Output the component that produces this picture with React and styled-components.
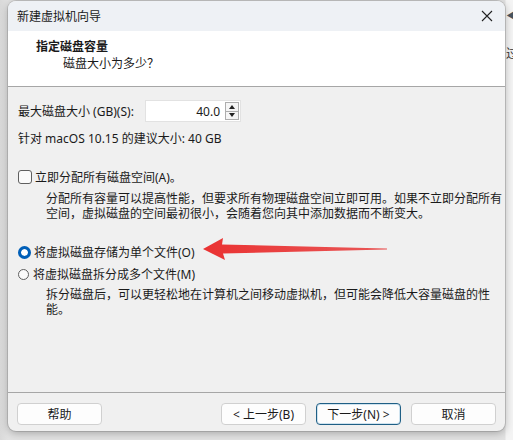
import React, { useState } from 'react';
import styled, { createGlobalStyle } from 'styled-components';

const GlobalStyle = createGlobalStyle`
  html, body {
    margin: 0;
    padding: 0;
    background: #e4e4e4;
    overflow: hidden;
  }
  body {
    font-family: "Noto Sans", "Noto Sans CJK SC", sans-serif;
    font-size: 12px;
    color: #1a1a1a;
  }
`;

const Desktop = styled.div`
  position: relative;
  width: 513px;
  height: 440px;
  padding: 1px 8px 0 8px;
  box-sizing: border-box;
  background: linear-gradient(90deg, #d9d9d9 0, #e2e2e2 8px, #e2e2e2 505px, #f4f4f4 506px);
`;

/* sliver of the window lying behind the wizard */
const BehindStrip = styled.div`
  position: absolute;
  left: 506px;
  top: 0;
  width: 7px;
  height: 80px;
  overflow: hidden;
`;

const BehindGlyph = styled.div`
  margin-top: ${(p) => p.$mt || 0}px;
  color: ${(p) => p.$color || '#333'};
  font-size: 12px;
  line-height: 14px;
  font-family: "Noto Sans CJK SC", sans-serif;
`;

const Dialog = styled.div`
  position: relative;
  width: 497px;
  height: 430px;
  display: flex;
  flex-direction: column;
  background: #f0f0f0;
  border-radius: 8px;
  overflow: hidden;
  box-shadow: 0 2px 8px rgba(0, 0, 0, 0.28), 0 0 0 1px rgba(0, 0, 0, 0.12);
`;

const TitleBar = styled.div`
  height: 30px;
  display: flex;
  align-items: center;
  justify-content: space-between;
  padding: 0 10px 0 9px;
  background: #eef1f5;
  font-size: 12px;
`;

const CloseBtn = styled.span`
  width: 16px;
  height: 16px;
  display: flex;
  align-items: center;
  justify-content: center;
`;

const Header = styled.div`
  height: 56px;
  background: #ffffff;
  border-bottom: 1px solid #a6a6a6;
  padding: 8px 0 0 28px;
  box-sizing: border-box;
`;

const HeaderTitle = styled.div`
  font-weight: 700;
  font-size: 12px;
  line-height: 16px;
`;

const HeaderSub = styled.div`
  margin-left: 27px;
  line-height: 17px;
`;

const Body = styled.div`
  position: relative;
  flex: 1;
  padding: 13px 10px 0 10px;
  border-bottom: 1px solid #a6a6a6;
`;

const Row = styled.div`
  display: flex;
  align-items: center;
  height: ${(p) => p.$h || 22}px;
  margin-top: ${(p) => p.$mt || 0}px;
`;

const SizeLabel = styled.span`
  width: 127px;
`;

const SpinBox = styled.div`
  width: 96px;
  height: 22px;
  display: flex;
  align-items: center;
  background: #ffffff;
  border: 1px solid #e2e2e2;
  box-sizing: border-box;
`;

const SpinValue = styled.span`
  flex: 1;
  text-align: right;
  padding-right: 5px;
`;

const SpinButtons = styled.div`
  width: 14px;
  height: 18px;
  margin-right: 1px;
  display: flex;
  flex-direction: column;
  border: 1px solid #adadad;
  box-sizing: border-box;
`;

const SpinArrow = styled.div`
  flex: 1;
  display: flex;
  align-items: center;
  justify-content: center;
  background: #f5f5f5;
  & + & {
    border-top: 1px solid #adadad;
  }
`;

const CheckBox = styled.span`
  width: 12px;
  height: 12px;
  border: 1px solid #5f5f5f;
  border-radius: 3px;
  background: #fafafa;
  margin-right: 3px;
`;

const Radio = styled.span`
  width: ${(p) => (p.$on ? 13 : 11)}px;
  height: ${(p) => (p.$on ? 13 : 11)}px;
  border-radius: 50%;
  box-sizing: border-box;
  margin-right: ${(p) => (p.$on ? 3 : 4)}px;
  ${(p) =>
    p.$on
      ? 'background: #005fb8; border: 3.5px solid #005fb8; box-shadow: inset 0 0 0 10px #fff;'
      : 'border: 1px solid #5f5f5f; background: #fafafa;'}
`;

const Desc = styled.p`
  margin: ${(p) => p.$mt || 0}px 0 0 28px;
  line-height: 15px;
  width: 460px;
`;

const Arrow = styled.svg`
  position: absolute;
  left: 177px;
  top: 147px;
  pointer-events: none;
`;

const Footer = styled.div`
  height: 38px;
  display: flex;
  align-items: flex-start;
  padding: 10px 9px 0 9px;
  box-sizing: border-box;
  gap: 10px;
`;

const Spacer = styled.div`
  flex: 1;
`;

const Button = styled.button`
  width: 85px;
  height: 22px;
  padding: 0;
  font-family: inherit;
  font-size: 12px;
  color: #1a1a1a;
  background: #fdfdfd;
  border: 1px solid ${(p) => (p.$focus ? '#1f5f85' : '#d0d0d0')};
  border-radius: 4px;
  box-shadow: ${(p) => (p.$focus ? 'inset 0 0 0 1px #cfe3ef' : 'none')};
`;

export default function App() {
  const [split, setSplit] = useState(false);

  return (
    <>
      <GlobalStyle />
      <Desktop>
        <BehindStrip>
          <BehindGlyph $mt={8} $color="#4a5560">◀</BehindGlyph>
          <BehindGlyph $mt={24}>过</BehindGlyph>
        </BehindStrip>
        <Dialog>
          <TitleBar>
            <span>新建虚拟机向导</span>
            <CloseBtn>
              <svg width="12" height="12" viewBox="0 0 12 12">
                <path d="M1 1 L11 11 M11 1 L1 11" stroke="#222" strokeWidth="1.1" />
              </svg>
            </CloseBtn>
          </TitleBar>

          <Header>
            <HeaderTitle>指定磁盘容量</HeaderTitle>
            <HeaderSub>磁盘大小为多少？</HeaderSub>
          </Header>

          <Body>
            <Row>
              <SizeLabel>最大磁盘大小 (GB)(S):</SizeLabel>
              <SpinBox>
                <SpinValue>40.0</SpinValue>
                <SpinButtons>
                  <SpinArrow>
                    <svg width="6" height="4" viewBox="0 0 6 4"><path d="M0 4 L3 0 L6 4 Z" fill="#222" /></svg>
                  </SpinArrow>
                  <SpinArrow>
                    <svg width="6" height="4" viewBox="0 0 6 4"><path d="M0 0 L3 4 L6 0 Z" fill="#222" /></svg>
                  </SpinArrow>
                </SpinButtons>
              </SpinBox>
            </Row>
            <Row $h={18} $mt={7}>针对 macOS 10.15 的建议大小: 40 GB</Row>

            <Row $h={18} $mt={21}>
              <CheckBox />
              立即分配所有磁盘空间(A)。
            </Row>
            <Desc $mt={5}>
              分配所有容量可以提高性能，但要求所有物理磁盘空间立即可用。如果不立即分配所有空间，虚拟磁盘的空间最初很小，会随着您向其中添加数据而不断变大。
            </Desc>

            <Row $h={18} $mt={22} onClick={() => setSplit(false)}>
              <Radio $on={!split} />
              将虚拟磁盘存储为单个文件(O)
            </Row>
            <Row $h={18} $mt={4} onClick={() => setSplit(true)}>
              <Radio $on={split} />
              将虚拟磁盘拆分成多个文件(M)
            </Row>
            <Desc $mt={4}>
              拆分磁盘后，可以更轻松地在计算机之间移动虚拟机，但可能会降低大容量磁盘的性能。
            </Desc>

            <Arrow width="210" height="32" viewBox="0 0 210 32">
              <defs>
                <linearGradient id="shaft" x1="0" x2="1" y1="0" y2="0">
                  <stop offset="0" stopColor="#ea3232" />
                  <stop offset="1" stopColor="#e95757" />
                </linearGradient>
              </defs>
              <path
                d="M18 15 L38 4 L37 10.5 L202 14.4 L202 15.6 L38 19.5 L40 26 Z"
                fill="url(#shaft)"
              />
            </Arrow>
          </Body>

          <Footer>
            <Button>帮助</Button>
            <Spacer />
            <Button>&lt; 上一步(B)</Button>
            <Button $focus>下一步(N) &gt;</Button>
            <Button>取消</Button>
          </Footer>
        </Dialog>
      </Desktop>
    </>
  );
}
